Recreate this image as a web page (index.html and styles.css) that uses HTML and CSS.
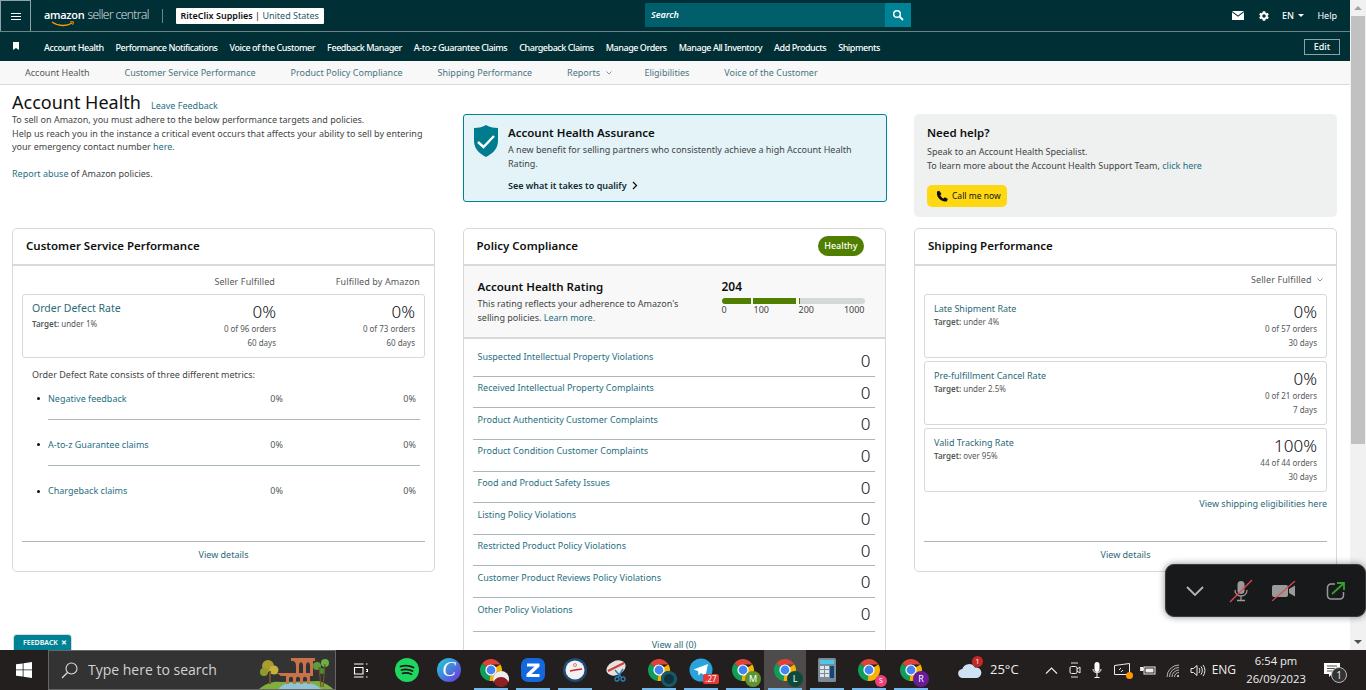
FILE: index.html
```html
<!DOCTYPE html>
<html lang="en">
<head>
  <meta charset="UTF-8">
  <title>Account Health</title>
  <link rel="stylesheet" href="styles.css">
</head>
<body>
  <svg class="defs" width="0" height="0">
    <symbol id="chrome" viewBox="0 0 24 24">
      <path fill="#db4437" d="M12 12 3.200 5.400A11 11 0 0 1 21.500 6.500H12z"/>
      <path fill="#0f9d58" d="M12 12 3.200 5.400A11 11 0 0 0 10.500 22.900L12 12z"/>
      <path fill="#f4b400" d="M12 12 21.500 6.500A11 11 0 0 1 10.500 22.900z"/>
      <circle cx="12" cy="12" r="5.600" fill="#fff"/>
      <circle cx="12" cy="12" r="4.400" fill="#4285f4"/>
    </symbol>
  </svg>

  <div class="window">
    <div class="page">
      <header>
        <div class="topbar">
          <button class="burger"><span></span><span></span><span></span></button>
          <div class="logo">
            <span class="logo-amazon">amazon</span><span class="logo-seller">seller central</span>
            <svg class="smile" width="24" height="6" viewBox="0 0 24 6"><path d="M1 1c6 4.500 15 4.500 20 1" fill="none" stroke="#f90" stroke-width="1.300"/><path d="M19 .8h3.500l-.8 3" fill="none" stroke="#f90" stroke-width="1"/></svg>
          </div>
          <i class="top-sep"></i>
          <div class="account"><b>RiteClix Supplies</b> | <span>United States</span></div>
          <div class="search">
            <span class="search-text">Search</span>
            <span class="search-btn"><svg width="12" height="12" viewBox="0 0 12 12"><circle cx="5" cy="5" r="3.300" fill="none" stroke="#fff" stroke-width="1.500"/><path d="M7.500 7.500 11 11" stroke="#fff" stroke-width="1.800"/></svg></span>
          </div>
          <div class="top-right">
            <svg width="12" height="9" viewBox="0 0 12 9"><path fill="#fff" d="M0 0h12L6 4.500z"/><path fill="#fff" d="M0 1.200V9h12V1.200L6 5.700z"/></svg>
            <svg class="gear" width="12" height="12" viewBox="0 0 24 24"><path fill="#fff" d="M19.400 13a7.500 7.500 0 0 0 0-2l2.300-1.700-2.300-4-2.600 1.100a7.500 7.500 0 0 0-1.800-1L14.600 2.500H9.400L9 5.300a7.500 7.500 0 0 0-1.800 1L4.600 5.300l-2.300 4L4.600 11a7.500 7.500 0 0 0 0 2l-2.300 1.700 2.300 4 2.600-1.100a7.500 7.500 0 0 0 1.800 1l.4 2.800h5.200l.4-2.800a7.500 7.500 0 0 0 1.800-1l2.600 1.100 2.300-4zM12 15.500a3.500 3.500 0 1 1 0-7 3.500 3.500 0 0 1 0 7z"/></svg>
            <span class="lang">EN <i class="caret"></i></span>
            <span class="help">Help</span>
          </div>
        </div>
        <nav class="mainnav">
          <svg class="pin" width="6" height="8" viewBox="0 0 6 8"><path fill="#fff" d="M0 0h6v8L3 6 0 8z"/></svg>
          <a>Account Health</a>
          <a>Performance Notifications</a>
          <a>Voice of the Customer</a>
          <a>Feedback Manager</a>
          <a>A-to-z Guarantee Claims</a>
          <a>Chargeback Claims</a>
          <a>Manage Orders</a>
          <a>Manage All Inventory</a>
          <a>Add Products</a>
          <a>Shipments</a>
          <button class="edit">Edit</button>
        </nav>
      </header>
      <nav class="subnav">
        <a class="current">Account Health</a>
        <a>Customer Service Performance</a>
        <a>Product Policy Compliance</a>
        <a>Shipping Performance</a>
        <a>Reports <svg class="reports-caret" width="6" height="4" viewBox="0 0 6 4"><path d="M.5.500 3 3 5.500.5" fill="none" stroke="#8a9596"/></svg></a>
        <a>Eligibilities</a>
        <a>Voice of the Customer</a>
      </nav>

      <main>
        <section class="top-row">
          <div class="intro">
            <div class="title-line">
              <h1>Account Health</h1>
              <a class="link">Leave Feedback</a>
            </div>
            <p>To sell on Amazon, you must adhere to the below performance targets and policies.</p>
            <p>Help us reach you in the instance a critical event occurs that affects your ability to sell by entering your emergency contact number <a class="link">here.</a></p>
            <p class="abuse"><a class="link">Report abuse</a> of Amazon policies.</p>
          </div>

          <div class="assurance">
            <svg class="shield" width="24" height="32" viewBox="0 0 24 32"><path fill="#007c8f" d="M12 0c3 2 7 3 12 3v13c0 8-6 13-12 16C6 29 0 24 0 16V3c5 0 9-1 12-3z"/><path d="M4 17l5.500 5L20 11" fill="none" stroke="#fff" stroke-width="2.400"/></svg>
            <div>
              <h3>Account Health Assurance</h3>
              <p>A new benefit for selling partners who consistently achieve a high Account Health Rating.</p>
              <a class="qualify">See what it takes to qualify <svg width="6" height="9" viewBox="0 0 6 9"><path d="M1 1l3.500 3.500L1 8" fill="none" stroke="#0f1111" stroke-width="1.300"/></svg></a>
            </div>
          </div>

          <div class="help-box">
            <h3>Need help?</h3>
            <p>Speak to an Account Health Specialist.</p>
            <p>To learn more about the Account Health Support Team, <a class="link">click here</a></p>
            <button class="call">
              <svg width="12" height="12" viewBox="0 0 24 24"><path fill="#0f1111" d="M6.500 1.500 2 3c-1 6 1 11 5 15s9 6 15 4.500l1.500-5-6-3-2.500 2.500c-3-1.500-5-3.500-6.500-6.500L11 8z"/></svg>
              Call me now
            </button>
          </div>
        </section>

        <section class="cards">
          <article class="card">
            <h2 class="card-head">Customer Service Performance</h2>
            <div class="card-body cs-body">
              <div class="col-labels">
                <span>Seller Fulfilled</span>
                <span>Fulfilled by Amazon</span>
              </div>
              <div class="metric-box odr">
                <div>
                  <a class="odr-name">Order Defect Rate</a>
                  <div class="target"><b>Target:</b> under 1%</div>
                </div>
                <div class="stat">
                  <div class="pct">0%</div>
                  <div class="small">0 of 96 orders</div>
                  <div class="small">60 days</div>
                </div>
                <div class="stat">
                  <div class="pct">0%</div>
                  <div class="small">0 of 73 orders</div>
                  <div class="small">60 days</div>
                </div>
              </div>
              <p class="consists">Order Defect Rate consists of three different metrics:</p>
              <ul class="metrics">
                <li><a class="link">Negative feedback</a><span>0%</span><span>0%</span></li>
                <li><a class="link">A-to-z Guarantee claims</a><span>0%</span><span>0%</span></li>
                <li><a class="link">Chargeback claims</a><span>0%</span><span>0%</span></li>
              </ul>
            </div>
            <a class="view-details">View details</a>
          </article>

          <article class="card card-tall">
            <h2 class="card-head">Policy Compliance <span class="pill">Healthy</span></h2>
            <div class="rating">
              <div class="rating-text">
                <h3>Account Health Rating</h3>
                <p>This rating reflects your adherence to Amazon's selling policies. <a class="link">Learn more.</a></p>
              </div>
              <div class="score">
                <strong>204</strong>
                <div class="bar">
                  <i class="seg seg-a"></i><i class="seg seg-b"></i><i class="seg seg-tick"></i><i class="seg seg-rest"></i>
                </div>
                <div class="bar-labels">
                  <span class="lab-a">0</span><span class="lab-b">100</span><span class="lab-c">200</span><span>1000</span>
                </div>
              </div>
            </div>
            <ul class="violations">
              <li><a class="link">Suspected Intellectual Property Violations</a><span>0</span></li>
              <li><a class="link">Received Intellectual Property Complaints</a><span>0</span></li>
              <li><a class="link">Product Authenticity Customer Complaints</a><span>0</span></li>
              <li><a class="link">Product Condition Customer Complaints</a><span>0</span></li>
              <li><a class="link">Food and Product Safety Issues</a><span>0</span></li>
              <li><a class="link">Listing Policy Violations</a><span>0</span></li>
              <li><a class="link">Restricted Product Policy Violations</a><span>0</span></li>
              <li><a class="link">Customer Product Reviews Policy Violations</a><span>0</span></li>
              <li><a class="link">Other Policy Violations</a><span>0</span></li>
            </ul>
            <a class="view-all">View all (0)</a>
          </article>

          <article class="card">
            <h2 class="card-head">Shipping Performance</h2>
            <div class="card-body ship-body">
              <div class="ship-select">Seller Fulfilled <svg width="6" height="4" viewBox="0 0 6 4"><path d="M.5.500 3 3 5.500.5" fill="none" stroke="#8a9596"/></svg></div>
              <div class="metric-box ship">
                <div>
                  <a class="link">Late Shipment Rate</a>
                  <div class="target"><b>Target:</b> under 4%</div>
                </div>
                <div class="stat">
                  <div class="pct">0%</div>
                  <div class="small">0 of 57 orders</div>
                  <div class="small">30 days</div>
                </div>
              </div>
              <div class="metric-box ship">
                <div>
                  <a class="link">Pre-fulfillment Cancel Rate</a>
                  <div class="target"><b>Target:</b> under 2.5%</div>
                </div>
                <div class="stat">
                  <div class="pct">0%</div>
                  <div class="small">0 of 21 orders</div>
                  <div class="small">7 days</div>
                </div>
              </div>
              <div class="metric-box ship">
                <div>
                  <a class="link">Valid Tracking Rate</a>
                  <div class="target"><b>Target:</b> over 95%</div>
                </div>
                <div class="stat">
                  <div class="pct">100%</div>
                  <div class="small">44 of 44 orders</div>
                  <div class="small">30 days</div>
                </div>
              </div>
              <a class="link elig">View shipping eligibilities here</a>
            </div>
            <a class="view-details">View details</a>
          </article>
        </section>
      </main>
    </div>

    <div class="scrollbar">
      <i class="arrow-up"></i>
      <div class="thumb"></div>
      <i class="arrow-down"></i>
    </div>

    <div class="feedback">FEEDBACK <span>✕</span></div>

    <div class="zoom-bar">
      <svg width="20" height="12" viewBox="0 0 20 12"><path d="M2 2l8 8 8-8" fill="none" stroke="#b5b5b5" stroke-width="1.800"/></svg>
      <svg class="zb-mic" width="24" height="24" viewBox="0 0 24 24"><rect x="8.500" y="2" width="7" height="13" rx="3.500" fill="#9a9a9a"/><path d="M6 11c0 8 12 8 12 0M12 17v4M8 21.500h8" fill="none" stroke="#9a9a9a" stroke-width="1.300"/><path d="M1 23 23 1" stroke="#e0484f" stroke-width="1.200"/></svg>
      <svg class="zb-cam" width="24" height="20" viewBox="0 0 24 20"><rect x="0" y="4" width="16" height="12" rx="2" fill="#9a9a9a"/><path d="M17 8l6-3.500v11L17 12z" fill="#9a9a9a"/><path d="M0 20 23 0" stroke="#e0484f" stroke-width="1.200"/></svg>
      <svg class="zb-share" width="20" height="20" viewBox="0 0 20 20"><path d="M9 3H5a3.500 3.500 0 0 0-3.500 3.500v8A3.500 3.500 0 0 0 5 18h9a3.500 3.500 0 0 0 3.500-3.500V11" fill="none" stroke="#9a9a9a" stroke-width="1.500"/><path d="M6 13 17 3M11 2h7v7" fill="none" stroke="#35a02c" stroke-width="1.800"/></svg>
    </div>
  </div>

  <footer class="taskbar">
    <span class="start">
      <svg width="16" height="16" viewBox="0 0 16 16"><path fill="#fff" d="M0 2.300 6.700 1.400V7.500H0zM7.500 1.300 16 0V7.500H7.500zM0 8.300H6.700V14.600L0 13.700zM7.500 8.300H16V16L7.500 14.700z"/></svg>
    </span>
    <div class="win-search">
      <svg width="17" height="17" viewBox="0 0 17 17"><circle cx="10.500" cy="6.500" r="5.500" fill="none" stroke="#ddd" stroke-width="1.100"/><path d="M6.500 10.500 1 16" stroke="#ddd" stroke-width="1.300"/></svg>
      <span>Type here to search</span>
      <svg class="bridge" width="78" height="40" viewBox="0 0 78 40">
        <path d="M0 40C8 32 16 30 24 31l38-1c6 2 12 5 16 10z" fill="#7fae3e"/>
        <path d="M20 40c4-6 8-8 14-8h16c6 0 12 3 16 8z" fill="#8fc3d8"/>
        <path d="M34 7h24v3h-2v14h-3V15c0-5-4-5-4 0v9h-3V15c0-5-4-5-4 0v9h-3V15c0-4-2-5-3-5h-2z" fill="#c9714a"/>
        <path d="M20 22h36v3h-3v8h-3v-5c0-3-4-3-4 0v5h-3v-5c0-3-4-3-4 0v5h-3v-5c0-3-4-3-4 0v5h-3v-8h-5z" fill="#c9714a"/>
        <circle cx="11" cy="15" r="6" fill="#a99b2f"/><circle cx="17" cy="19" r="4.500" fill="#c4b23a"/><circle cx="7" cy="21" r="4" fill="#8e9a2c"/>
        <rect x="12" y="20" width="2" height="13" fill="#6e5327"/>
        <circle cx="60" cy="15" r="4" fill="#5d9e3a"/><circle cx="68" cy="12" r="4" fill="#6cb043"/><circle cx="65" cy="20" r="3" fill="#4d8a30"/>
        <path d="M62 16l2 20M68 13l-2 23" stroke="#6e5327" stroke-width="1.200"/>
      </svg>
    </div>
    <div class="apps">
      <span class="app app-first"><svg width="15" height="15" viewBox="0 0 15 15"><path d="M1 1h9.500M1 14h9.500M1.500 4.500h8.500v6.500H1.500zM13 1h1.500M13 6.500h1.500v2H13M13 14h1.500" fill="none" stroke="#fff" stroke-width="1.100"/></svg></span>
      <span class="app"><svg width="24" height="24" viewBox="0 0 24 24"><circle cx="12" cy="12" r="12" fill="#1ed760"/><path d="M5.500 8.500c4-1.300 9-1 13 1M6.500 12c3.500-1 7.500-.7 11 1M7.500 15.300c3-.8 6-.5 9 .9" fill="none" stroke="#1a1a1a" stroke-width="1.800" stroke-linecap="round"/></svg></span>
      <span class="app"><svg width="24" height="24" viewBox="0 0 24 24"><defs><linearGradient id="canva" x1="0" y1="0" x2="1" y2="1"><stop offset="0" stop-color="#1fd3d6"/><stop offset="1" stop-color="#6d2fe0"/></linearGradient></defs><circle cx="12" cy="12" r="12" fill="url(#canva)"/><text x="12" y="18" class="canva-c">C</text></svg></span>
      <span class="app run"><svg width="24" height="24"><use href="#chrome"/></svg><i class="badge badge-photo"></i></span>
      <span class="app run"><svg width="24" height="24" viewBox="0 0 24 24"><rect width="24" height="24" rx="7" fill="#1368e0"/><path d="M6 5.500h12.500v3L10.500 16H18.500v3H5.500v-3l8-7.500H6z" fill="#fff"/></svg></span>
      <span class="app run"><svg width="24" height="24" viewBox="0 0 24 24"><circle cx="12" cy="12" r="12" fill="#1f4a78"/><circle cx="12" cy="12" r="9.500" fill="#f2f2f2"/><path d="M12 12l7-1M12 12 7 13" stroke="#c62828" stroke-width="1.500"/><circle cx="12" cy="7" r="1.500" fill="none" stroke="#b55" stroke-width=".7"/></svg></span>
      <span class="app"><svg width="24" height="24" viewBox="0 0 24 24"><ellipse cx="11" cy="10" rx="10" ry="7" fill="#e6e1dc" transform="rotate(-25 11 10)"/><path d="M3 13 19 5" stroke="#c9403c" stroke-width="2"/><path d="M10 12l6 7M18 11l-5 8" stroke="#2a7fb8" stroke-width="1.500"/><circle cx="18" cy="21" r="2" fill="none" stroke="#2a7fb8" stroke-width="1.300"/><circle cx="12" cy="21" r="2" fill="none" stroke="#2a7fb8" stroke-width="1.300"/></svg></span>
      <span class="app run"><svg width="24" height="24"><use href="#chrome"/></svg><i class="badge badge-dark"></i></span>
      <span class="app run"><svg width="24" height="24" viewBox="0 0 24 24"><circle cx="12" cy="12" r="11.500" fill="#2aa3dc"/><path d="M4.500 11.500 19 6l-2.500 12-4.500-3-2.500 2.500-.5-4.500z" fill="#fff"/></svg><i class="count">.27</i></span>
      <span class="app run"><svg width="24" height="24"><use href="#chrome"/></svg><i class="badge badge-m">M</i></span>
      <span class="app run active"><svg width="24" height="24"><use href="#chrome"/></svg><i class="badge badge-l">L</i></span>
      <span class="app run"><svg width="18" height="24" viewBox="0 0 18 24"><rect width="18" height="24" rx="1.500" fill="#7c8b97"/><rect x="2" y="2" width="14" height="4" fill="#4cc9e8"/><path d="M2 8h4v3H2zM7 8h4v3H7zM2 12h4v3H2zM7 12h4v3H7zM2 16h4v3H2zM7 16h4v3H7z" fill="#dfe5ea"/><rect x="12" y="8" width="4" height="12" fill="#12467a"/></svg></span>
      <span class="app run"><svg width="24" height="24"><use href="#chrome"/></svg><i class="badge badge-s">S</i></span>
      <span class="app run"><svg width="24" height="24"><use href="#chrome"/></svg><i class="badge badge-r">R</i></span>
    </div>
    <div class="tray">
      <span class="weather">
        <svg width="24" height="18" viewBox="0 0 24 18"><path d="M5 17a4.500 4.500 0 0 1-.7-9A7 7 0 0 1 17 6.500 5.200 5.200 0 0 1 19 17z" fill="#cfe2f5"/></svg>
        <i class="weather-badge">1</i>
      </span>
      <span class="temp">25°C</span>
      <svg class="tray-up" width="13" height="7" viewBox="0 0 13 7"><path d="M1 6.500 6.500 1 12 6.500" fill="none" stroke="#eee" stroke-width="1.100"/></svg>
      <svg class="tray-icon" width="12" height="16" viewBox="0 0 12 16"><path d="M2 1h7M2 15h7" stroke="#ddd"/><rect x="1" y="4.500" width="7" height="7" rx="1.500" fill="none" stroke="#eee"/><path d="M8 7l3-2v6L8 9" fill="none" stroke="#eee"/></svg>
      <svg class="tray-icon" width="10" height="16" viewBox="0 0 10 16"><rect x="2.500" y="0" width="5" height="10" rx="2.500" fill="#fff"/><path d="M1 7c0 5 8 5 8 0M5 11v4M2.500 15.500h5" fill="none" stroke="#fff"/></svg>
      <span class="tray-screen">
        <svg width="16" height="14" viewBox="0 0 16 14"><path d="M.5 2.500 15.500.5v11H.5z" fill="none" stroke="#eee"/><path d="M5 7l2-2M9 7l-2 2" stroke="#eee"/></svg>
        <i></i>
      </span>
      <svg class="tray-icon" width="16" height="10" viewBox="0 0 16 10"><rect x="4" y="2" width="11" height="7" fill="none" stroke="#eee"/><rect x="5.500" y="3.500" width="8" height="4" fill="#eee"/><path d="M0 2.500h3M0 5.500h3" stroke="#eee"/><circle cx="2" cy="4" r="2" fill="#eee"/></svg>
      <svg class="tray-icon" width="14" height="13" viewBox="0 0 14 13"><path d="M1 13A12 12 0 0 1 13 1M3.500 13A9.500 9.500 0 0 1 13 3.500M6 13A7 7 0 0 1 13 6M8.500 13A4.500 4.500 0 0 1 13 8.500" fill="none" stroke="#ddd" stroke-width=".8"/><circle cx="12" cy="12" r="1" fill="#eee"/></svg>
      <svg class="tray-icon" width="16" height="13" viewBox="0 0 16 13"><path d="M1 4.500h2.500L7 1.500v10l-3.500-3H1z" fill="none" stroke="#eee"/><path d="M9 4c1 1.500 1 3.500 0 5M11 2.500c1.800 2.500 1.800 5.500 0 8M13 1c2.500 3.200 2.500 7.800 0 11" fill="none" stroke="#eee"/></svg>
      <span class="eng">ENG</span>
      <span class="clock"><span>6:54 pm</span><span>26/09/2023</span></span>
      <span class="notify">
        <svg width="16" height="14" viewBox="0 0 16 14"><path fill="#fff" d="M0 0h16v11H8l-3 3v-3H0z"/><path d="M3 3h10M3 5.500h10M3 8h7" stroke="#222" stroke-width=".8"/></svg>
        <i>1</i>
      </span>
    </div>
  </footer>
</body>
</html>
```

FILE: styles.css
```css
* {
    box-sizing: border-box;
}

html, body {
    margin: 0;
    height: 690px;
    overflow: hidden;
}

body {
    font-family: "Noto Sans", "Open Sans", Arial, sans-serif;
    font-size: 9px;
    line-height: 13.5px;
    color: #0f1111;
    background: #fff;
    display: flex;
    flex-direction: column;
}

.defs {
    position: absolute;
}

h1, h2, h3, p, ul {
    margin: 0;
    padding: 0;
}

ul {
    list-style: none;
}

a {
    color: inherit;
    text-decoration: none;
}

i {
    font-style: normal;
}

.link {
    color: #26707f;
}

.window {
    position: relative;
    height: 650px;
    display: flex;
    overflow: hidden;
}

.page {
    width: 1350px;
    overflow: hidden;
}

/* header */
header {
    background: #002f36;
    color: #fff;
}

.topbar {
    height: 32px;
    display: flex;
    align-items: center;
    border-bottom: 1px solid #6c8287;
}

.burger {
    width: 31px;
    height: 31px;
    border: 0;
    border-left: 1px solid #8fa3a6;
    border-right: 1px solid #8fa3a6;
    border-top: 1px solid #8fa3a6;
    background: transparent;
    display: flex;
    flex-direction: column;
    justify-content: center;
    align-items: center;
    gap: 2px;
    padding: 0;
}

.burger span {
    width: 10px;
    height: 1px;
    background: #fff;
}

.logo {
    position: relative;
    margin-left: 13px;
    width: 118px;
    white-space: nowrap;
    font-family: "Open Sans", sans-serif;
}

.logo-amazon {
    font-size: 11px;
    font-weight: 600;
    letter-spacing: -.3px;
}

.logo-seller {
    margin-left: 3px;
    font-size: 12px;
    font-weight: 300;
    letter-spacing: -.55px;
    color: #e6ebeb;
}

.smile {
    position: absolute;
    left: 7px;
    top: 13px;
}

.top-sep {
    width: 1px;
    height: 14px;
    background: #6c8287;
}

.account {
    margin-left: 13px;
    width: 148px;
    height: 16px;
    padding-left: 4.500px;
    line-height: 16px;
    background: #fff;
    color: #0f1111;
    border-radius: 1px;
    white-space: nowrap;
}

.account b {
    font-weight: 600;
}

.account span {
    color: #2b5a66;
}

.search {
    position: absolute;
    left: 645px;
    top: 3px;
    width: 266px;
    height: 24px;
    display: flex;
    align-items: center;
    justify-content: space-between;
    background: #005f6b;
}

.search-text {
    padding-left: 6px;
    font-style: italic;
    font-weight: 600;
}

.search-btn {
    width: 26px;
    height: 24px;
    display: flex;
    align-items: center;
    justify-content: center;
    background: #008296;
}

.top-right {
    margin-left: auto;
    display: flex;
    align-items: center;
    padding-right: 13px;
}

.gear {
    margin-left: 14px;
}

.lang {
    margin-left: 12px;
    font-weight: 500;
}

.caret {
    display: inline-block;
    margin-left: 2px;
    vertical-align: 2px;
    border-left: 3px solid transparent;
    border-right: 3px solid transparent;
    border-top: 3px solid #fff;
}

.help {
    margin-left: 13px;
}

.mainnav {
    height: 29px;
    display: flex;
    align-items: center;
    gap: 12px;
    padding: 2px 10px 0 13px;
    font-weight: 500;
    letter-spacing: -.45px;
    white-space: nowrap;
}

.pin {
    position: relative;
    top: -2px;
    margin-right: 13px;
}

.edit {
    position: relative;
    top: -1px;
    margin-left: auto;
    width: 36px;
    height: 16px;
    padding: 0;
    border: 1px solid #8fa3a6;
    background: transparent;
    color: #fff;
    font: inherit;
    letter-spacing: 0;
}

.subnav {
    height: 24px;
    display: flex;
    align-items: center;
    gap: 35px;
    padding-left: 25px;
    color: #48757f;
    background: #f8f8f8;
    border-bottom: 1px solid #d5d9d9;
    white-space: nowrap;
}

.subnav .current {
    color: #565959;
}

.reports-caret {
    margin: 0 -3px 0 4px;
    vertical-align: 1px;
}

/* content */
main {
    padding: 0 13px 0 12px;
}

.top-row {
    display: grid;
    grid-template-columns: 423px 423px 424px;
    column-gap: 27.500px;
    height: 143px;
    color: #3f4545;
}

.title-line {
    display: flex;
    align-items: baseline;
    gap: 10px;
    padding-top: 5px;
    height: 28px;
}

h1 {
    font-size: 18px;
    line-height: 24px;
    font-weight: 400;
    color: #0f1111;
}

.abuse {
    margin-top: 13px;
}

.assurance {
    margin: 29px -1px 0 .5px;
    height: 88px;
    padding: 9px 12px 0 10px;
    display: flex;
    gap: 10px;
    background: #e3f3f8;
    border: 1px solid #008296;
    border-radius: 3px;
}

.shield {
    flex: none;
    margin-top: 1px;
}

.assurance h3,
.help-box h3 {
    font-size: 11.500px;
    line-height: 17px;
    font-weight: 600;
    color: #0f1111;
}

.assurance p {
    margin-top: 2px;
}

.qualify {
    display: block;
    margin-top: 9px;
    font-weight: 600;
    color: #0f2a30;
}

.qualify svg {
    margin-left: 3px;
    vertical-align: -1px;
}

.help-box {
    margin-top: 29px;
    margin-left: 1px;
    height: 103px;
    padding: 10px 13px 0 13px;
    background: #eff0f0;
    border-radius: 5px;
}

.help-box h3 {
    margin-bottom: 4px;
}

.call {
    margin-top: 13px;
    display: flex;
    align-items: center;
    gap: 4px;
    width: 80px;
    height: 22px;
    padding: 0 0 0 9px;
    border: 0;
    border-radius: 5px;
    background: #ffd814;
    color: #0f1111;
    font: inherit;
    font-size: 8.500px;
}

.cards {
    display: grid;
    grid-template-columns: 423px 423px 424px;
    column-gap: 27.500px;
    align-items: start;
}

.card {
    position: relative;
    height: 344px;
    background: #fff;
    border: 1px solid #d5d9d9;
    border-radius: 5px;
}

.card:last-child {
    margin-left: 1px;
}

.card-tall {
    height: 460px;
}

.card-head {
    display: flex;
    align-items: center;
    justify-content: space-between;
    height: 37px;
    padding: 0 21px 2px 13px;
    font-size: 11.500px;
    font-weight: 600;
    border-bottom: 2px solid #d5dbdb;
}

.pill {
    padding: 0 6px;
    height: 20px;
    line-height: 19px;
    font-size: 9px;
    font-weight: 500;
    color: #fff;
    background: #507f00;
    border-radius: 10px;
}

.card-body {
    padding: 0 9px;
}

.col-labels {
    display: grid;
    grid-template-columns: 1fr 145px;
    height: 28px;
    align-items: center;
    padding: 3px 5px 0 0;
    color: #565959;
    text-align: right;
    letter-spacing: .1px;
}

.metric-box {
    display: grid;
    border: 1px solid #d5d9d9;
    border-radius: 3px;
    height: 64px;
    padding: 7px 9px 0;
}

.odr {
    grid-template-columns: 1fr 140px 139px;
}

.odr-name {
    font-size: 10.500px;
    color: #2b6a78;
}

.odr .target {
    margin-top: 1px;
}

.target {
    font-size: 8px;
    line-height: 14px;
    color: #565959;
}

.target b {
    font-weight: 600;
}

.stat {
    text-align: right;
}

.pct {
    font-size: 17px;
    line-height: 20px;
    font-weight: 300;
    color: #0f1111;
}

.small {
    font-size: 8px;
    line-height: 14px;
    color: #565959;
}

.consists {
    margin-top: 10px;
    padding-left: 10px;
    color: #3f4545;
}

.metrics {
    padding-right: 5px;
}

.metrics li {
    position: relative;
    display: grid;
    grid-template-columns: minmax(0, 1fr) 142px 133px;
    height: 46.700px;
    padding: 18px 4px 0 26px;
    text-align: right;
    color: #565959;
}

.metrics li:first-child {
    height: 38px;
    padding-top: 10px;
}

.metrics li a {
    text-align: left;
    white-space: nowrap;
}

.metrics li::before {
    content: "";
    position: absolute;
    left: 15px;
    bottom: 20px;
    width: 3px;
    height: 3px;
    border-radius: 50%;
    background: #0f1111;
}

.metrics li:not(:last-child)::after {
    content: "";
    position: absolute;
    left: 26px;
    right: 0;
    bottom: 0;
    border-bottom: 1px solid #aab7b8;
}

.view-details {
    position: absolute;
    left: 9px;
    right: 9px;
    top: 312px;
    padding-top: 6px;
    height: 24px;
    border-top: 1px solid #aab7b8;
    text-align: center;
    color: #2b6a78;
}

.rating {
    display: flex;
    height: 73px;
    padding: 14px 20px 0 14px;
    background: #f8f8f8;
    border-bottom: 2px solid #d5dbdb;
    color: #3f4545;
}

.rating-text {
    width: 244px;
}

.rating-text p {
    width: 215px;
}

.rating h3 {
    font-size: 11.500px;
    line-height: 14px;
    font-weight: 600;
    color: #0f1111;
    margin-bottom: 3px;
}

.score {
    flex: 1;
}

.score strong {
    display: block;
    font-size: 12px;
    line-height: 14px;
    font-weight: 600;
    color: #0f1111;
}

.bar {
    margin-top: 4px;
    height: 6px;
    display: flex;
}

.seg {
    display: block;
    height: 6px;
    background: #507f00;
}

.seg-a {
    width: 29px;
    margin-right: 2px;
    border-radius: 3px 0 0 3px;
}

.seg-b {
    width: 43px;
    margin-right: 3px;
}

.seg-tick {
    width: 1px;
}

.seg-rest {
    flex: 1;
    background: #d5d9d9;
    border-radius: 0 3px 3px 0;
}

.bar-labels {
    display: flex;
    line-height: 12px;
}

.lab-a {
    width: 32px;
}

.lab-b {
    width: 45px;
}

.lab-c {
    flex: 1;
}

.violations {
    padding: 6px 10px 0 9px;
}

.violations li {
    display: flex;
    justify-content: space-between;
    height: 31.650px;
    padding: 4.500px 0 0 5px;
    border-bottom: 1px solid #aab7b8;
}

.violations li span {
    font-size: 17px;
    font-weight: 300;
    line-height: 20px;
    margin-top: 1.500px;
    padding-right: 4px;
}

.violations li:last-child {
    height: 34px;
}

.view-all {
    display: block;
    padding-top: 6px;
    text-align: center;
    color: #2b6a78;
}

.ship-body {
    display: flex;
    flex-direction: column;
    gap: 3px;
}

.ship-select {
    height: 25px;
    padding-right: 4px;
    line-height: 27px;
    text-align: right;
    color: #565959;
    letter-spacing: .1px;
}

.ship-select svg {
    margin-left: 3px;
    vertical-align: 1px;
}

.ship {
    grid-template-columns: 1fr 120px;
    padding: 7px 9px 0;
}

.ship .link,
.elig {
    color: #2b6a78;
}

.ship .target {
    margin-top: -1px;
}

.elig {
    text-align: right;
    margin-top: 2px;
}

/* scrollbar */
.scrollbar {
    width: 16px;
    background: #f1f1f1;
    position: relative;
}

.thumb {
    position: absolute;
    top: 16px;
    left: 1px;
    width: 14px;
    height: 428px;
    background: #c1c1c1;
}

.arrow-up, .arrow-down {
    position: absolute;
    left: 4px;
    border-left: 4px solid transparent;
    border-right: 4px solid transparent;
}

.arrow-up {
    top: 6px;
    border-bottom: 4px solid #a3a3a3;
}

.arrow-down {
    bottom: 6px;
    border-top: 4px solid #505050;
}

/* overlays */
.feedback {
    position: absolute;
    left: 14px;
    bottom: 0;
    width: 57px;
    height: 15px;
    padding-left: 9px;
    line-height: 15px;
    font-size: 7px;
    font-weight: 600;
    color: #fff;
    background: #008296;
    border-radius: 3px 3px 0 0;
    box-shadow: 0 0 0 1px #d5dbdb;
}

.feedback span {
    margin-left: 1px;
}

.zoom-bar {
    position: absolute;
    left: 1165px;
    top: 564px;
    width: 201px;
    height: 53px;
    display: flex;
    align-items: center;
    padding-left: 19px;
    background: #18191b;
    border: 1px solid #3a3b3d;
    border-radius: 9px;
    box-shadow: 0 0 7px rgba(0, 0, 0, .45);
}

.zb-mic {
    margin-left: 24px;
}

.zb-cam {
    margin-left: 19px;
}

.zb-share {
    margin-left: 30px;
}

/* windows taskbar */
.taskbar {
    height: 40px;
    display: flex;
    align-items: stretch;
    background: #221f1e;
    color: #fff;
}

.start {
    width: 48px;
    display: flex;
    align-items: center;
    justify-content: center;
}

.win-search {
    position: relative;
    width: 288px;
    display: flex;
    align-items: center;
    gap: 10px;
    padding-left: 12px;
    background: #333;
    border: 1px solid #666;
    font-family: "Open Sans", sans-serif;
    font-size: 14px;
    color: #d2d2d2;
    overflow: hidden;
}

.bridge {
    position: absolute;
    right: 0;
    top: 0;
}

.apps {
    margin-left: 3px;
    display: flex;
}

.app {
    position: relative;
    width: 42px;
    display: flex;
    align-items: center;
    justify-content: center;
}

.app-first {
    margin-right: 5px;
}

.app.run::after {
    content: "";
    position: absolute;
    left: 4px;
    right: 4px;
    bottom: 0;
    height: 2px;
    background: #76b9ed;
}

.app.active {
    background: #4e4c4b;
}

.canva-c {
    font-family: "Liberation Serif", serif;
    font-style: italic;
    font-size: 20px;
    fill: #fff;
    text-anchor: middle;
}

.badge {
    position: absolute;
    right: 3px;
    bottom: 3px;
    width: 16px;
    height: 16px;
    line-height: 16px;
    text-align: center;
    border-radius: 50%;
    font-size: 9px;
    color: #fff;
}

.badge-photo {
    background: #8e1f22;
    box-shadow: inset 0 6px 0 #eee;
}

.badge-dark {
    background: #10333d;
    box-shadow: inset 0 0 0 3px #16596b;
}

.badge-m {
    background: #5d9431;
}

.badge-l {
    background: #0d4a3e;
}

.badge-s {
    background: #ec407a;
    width: 12px;
    height: 12px;
    line-height: 12px;
    font-size: 7px;
}

.badge-r {
    background: #6a1b9a;
}

.count {
    position: absolute;
    right: 3px;
    bottom: 6px;
    width: 16px;
    height: 10px;
    line-height: 10px;
    text-align: center;
    font-size: 8px;
    background: #e53935;
    border-radius: 2px;
}

.tray {
    flex: 1;
    display: flex;
    align-items: center;
    position: relative;
    padding-left: 26px;
    font-family: "Open Sans", sans-serif;
    font-size: 12px;
    color: #eee;
    white-space: nowrap;
}

.weather {
    position: relative;
    display: flex;
}

.weather-badge {
    position: absolute;
    right: -1px;
    top: -5px;
    width: 11px;
    height: 11px;
    line-height: 11px;
    text-align: center;
    font-size: 7px;
    border-radius: 50%;
    background: #c62828;
    color: #fff;
}

.temp {
    margin-left: 8px;
    font-size: 13px;
}

.tray-up {
    margin-left: 26px;
}

.tray-icon {
    margin-left: 11px;
}

.tray-screen {
    position: relative;
    margin-left: 12px;
    display: flex;
}

.tray-screen i {
    position: absolute;
    right: -3px;
    bottom: -2px;
    width: 7px;
    height: 7px;
    border-radius: 50%;
    background: #ff9800;
}

.tray-screen ~ .tray-icon {
    margin-left: 10px;
}

.eng {
    margin-left: 6px;
}

.clock {
    margin-left: 8px;
    width: 64px;
    font-size: 11.250px;
    display: flex;
    flex-direction: column;
    align-items: center;
    line-height: 18px;
}

.notify {
    position: relative;
    margin-left: 16px;
    display: flex;
}

.notify i {
    position: absolute;
    right: -7px;
    bottom: -6px;
    width: 16px;
    height: 16px;
    line-height: 14px;
    text-align: center;
    font-size: 10px;
    border-radius: 50%;
    border: 1px solid #bbb;
    background: #333;
}
```
